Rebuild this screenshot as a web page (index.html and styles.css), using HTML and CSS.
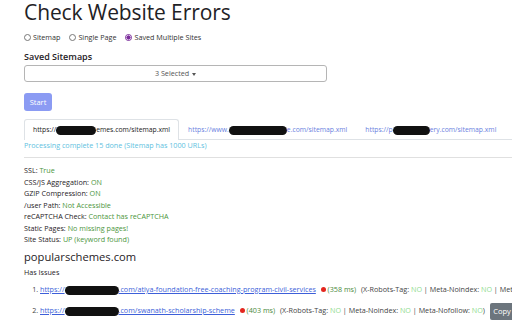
FILE: index.html
```html
<!DOCTYPE html>
<html lang="en">
<head>
  <meta charset="UTF-8">
  <meta name="viewport" content="width=device-width, initial-scale=1">
  <title>Check Website Errors</title>
  <link rel="stylesheet" href="styles.css">
</head>
<body>
  <div class="page">
    <h1>Check Website Errors</h1>

    <div class="modes">
      <label class="radio"><span class="dot"></span>Sitemap</label>
      <label class="radio"><span class="dot"></span>Single Page</label>
      <label class="radio"><span class="dot checked"></span>Saved Multiple Sites</label>
    </div>

    <div class="field-label">Saved Sitemaps</div>
    <div class="select-box">3 Selected <span class="caret"></span></div>

    <button class="btn-start">Start</button>

    <div class="tabs">
      <div class="tab active">https://<span class="blot w40"></span>emes.com/sitemap.xml</div>
      <div class="tab">https://www.<span class="blot w58"></span>e.com/sitemap.xml</div>
      <div class="tab">https://p<span class="blot w37"></span>ery.com/sitemap.xml</div>
    </div>
    <div class="progress-text">Processing complete 15 done (Sitemap has 1000 URLs)</div>

    <hr>

    <ul class="checks">
      <li>SSL: <span class="ok">True</span></li>
      <li>CSS/JS Aggregation: <span class="ok">ON</span></li>
      <li>GZIP Compression: <span class="ok">ON</span></li>
      <li>/user Path: <span class="ok">Not Accessible</span></li>
      <li>reCAPTCHA Check: <span class="ok">Contact has reCAPTCHA</span></li>
      <li>Static Pages: <span class="ok">No missing pages!</span></li>
      <li>Site Status: <span class="ok">UP (keyword found)</span></li>
    </ul>

    <h3 class="site-name">popularschemes.com</h3>
    <div class="issues-label">Has Issues</div>

    <ol class="issues">
      <li>
        <a href="#">https://<span class="blot w54"></span>.com/atiya-foundation-free-coaching-program-civil-services</a>
        <span class="red-dot"></span>
        <span class="ms">(358 ms)</span>
        <span class="meta">(X-Robots-Tag: <span class="no">NO</span> | Meta-Noindex: <span class="no">NO</span> | Meta-Nofollow: <span class="no">NO</span>)</span>
        <button class="btn-copy">Copy</button>
      </li>
      <li>
        <a href="#">https://<span class="blot w54"></span>.com/swanath-scholarship-scheme</a>
        <span class="red-dot"></span>
        <span class="ms">(403 ms)</span>
        <span class="meta">(X-Robots-Tag: <span class="no">NO</span> | Meta-Noindex: <span class="no">NO</span> | Meta-Nofollow: <span class="no">NO</span>)</span>
        <button class="btn-copy">Copy</button>
      </li>
    </ol>
  </div>
</body>
</html>
```

FILE: styles.css
```css
:root {
  --text: #1f2226;
  --muted-border: #dee2e6;
  --link: #3d5fd9;
  --tab-link: #6a7fe0;
  --info: #62bfe0;
  --ok: #4d9640;
  --no: #8fdc8f;
  --font-main: 'Open Sans', 'Noto Sans', Arial, sans-serif;
}

body {
  margin: 0;
  font-family: var(--font-main);
  font-size: 7.2px;
  color: var(--text);
  background: #fff;
  overflow: hidden;
}

.page {
  padding: 0 0 0 24px;
  white-space: nowrap;
}

h1 {
  margin: 0;
  font-size: 21px;
  font-weight: 500;
  line-height: 24px;
  letter-spacing: -0.1px;
}

/* boutons radio */
.modes {
  display: flex;
  gap: 9px;
  margin-top: 7px;
  height: 12px;
  align-items: center;
}

.radio {
  display: flex;
  align-items: center;
  gap: 2px;
  color: #333;
}

.radio .dot {
  width: 5px;
  height: 5px;
  border: 1px solid #777;
  border-radius: 50%;
}

.radio .dot.checked {
  border-color: #7b2d9b;
  background: radial-gradient(circle, #7b2d9b 55%, #fff 60%);
}

.field-label {
  margin-top: 6.5px;
  font-size: 9px;
  font-weight: 600;
  line-height: 13px;
}

.select-box {
  width: 301px;
  height: 15px;
  margin-top: 2.5px;
  border: 1px solid #b5b5b5;
  border-radius: 3px;
  text-align: center;
  line-height: 15px;
  color: #555;
}

.caret {
  display: inline-block;
  border-left: 2.5px solid transparent;
  border-right: 2.5px solid transparent;
  border-top: 3px solid #555;
  vertical-align: middle;
  margin-left: 1px;
}

.btn-start {
  display: block;
  margin-top: 11px;
  width: 28px;
  height: 18px;
  padding: 0;
  border: none;
  border-radius: 3px;
  background: #8b9bf3;
  color: #fff;
  font-family: var(--font-main);
  font-size: 7.5px;
}

/* onglets */
.tabs {
  display: flex;
  margin-top: 8px;
  border-bottom: 1px solid var(--muted-border);
  height: 20px;
  font-size: 6.8px;
}

.tab {
  padding: 0 8px;
  line-height: 20px;
  color: var(--tab-link);
  border: 1px solid transparent;
  border-bottom: none;
  border-radius: 3px 3px 0 0;
}

.tab.active {
  color: #222;
  border-color: var(--muted-border);
  background: #fff;
  height: 20px;
}

.blot {
  display: inline-block;
  height: 9px;
  background: #111;
  border-radius: 6px;
  vertical-align: middle;
}

.w37 { width: 37px; }
.w40 { width: 40px; }
.w54 { width: 54px; }
.w58 { width: 58px; }

.progress-text {
  color: var(--info);
  line-height: 11px;
}

hr {
  margin: 6px 0 0 0;
  border: none;
  border-top: 1px solid #e0e0e0;
}

.checks {
  list-style: none;
  margin: 7px 0 0 0;
  padding: 0;
}

.checks li {
  line-height: 11.5px;
}

.ok {
  color: var(--ok);
}

.site-name {
  margin: 4px 0 0 0;
  font-size: 11.2px;
  font-weight: 500;
  line-height: 14px;
}

.issues-label {
  margin-top: 3.5px;
  line-height: 11px;
}

.issues {
  margin: 1px 0 0 0;
  padding-left: 16px;
}

.issues li {
  height: 21px;
  line-height: 21px;
  color: #444;
}

.issues a {
  color: var(--link);
}

.red-dot {
  display: inline-block;
  width: 5px;
  height: 5px;
  border-radius: 50%;
  background: #e3261f;
  margin-left: 3px;
  vertical-align: 0;
}

.ms {
  color: #4b8a3c;
}

.meta {
  margin-left: 3px;
}

.no {
  color: var(--no);
}

.btn-copy {
  margin-left: 3px;
  height: 17px;
  padding: 0 3.5px;
  border: none;
  border-radius: 2px;
  background: #6c757d;
  color: #fff;
  font-family: var(--font-main);
  font-size: 7.5px;
  vertical-align: middle;
}
```
